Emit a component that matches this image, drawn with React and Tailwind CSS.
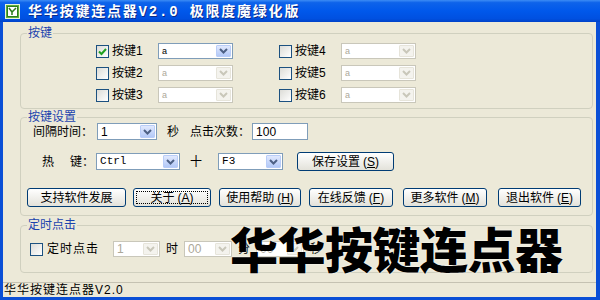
import React from "react";

const Chevron = ({ color }) => (
  <svg width="9" height="6" viewBox="0 0 9 6">
    <path d="M1 1 L4.5 4.5 L8 1" fill="none" stroke={color} strokeWidth="2" />
  </svg>
);

function Combo({ cls, text, disabled, textCls = "text-[10px]" }) {
  return (
    <div
      className={`${cls} flex border bg-white shrink-0 ${
        disabled ? "border-[#C9C7BA]" : "border-[#7F9DB9]"
      }`}
    >
      <div
        className={`flex-1 flex items-center pl-[3px] overflow-hidden whitespace-nowrap leading-none ${textCls} ${
          disabled ? "text-[#ACA899]" : "text-black"
        }`}
      >
        {text}
      </div>
      <div
        className={`w-[15px] m-[1px] flex items-center justify-center rounded-[1px] border ${
          disabled
            ? "border-[#E6E4DA] bg-[#F4F3EE]"
            : "border-[#B9CDF8] bg-gradient-to-b from-[#E1E9FE] to-[#B3C9F7]"
        }`}
      >
        <Chevron color={disabled ? "#C9C7BA" : "#4D6185"} />
      </div>
    </div>
  );
}

function Check({ checked }) {
  return (
    <div className="w-[13px] h-[13px] shrink-0 border border-[#1C5180] bg-gradient-to-br from-[#DCDCD7] to-white flex items-center justify-center">
      {checked && (
        <svg width="9" height="9" viewBox="0 0 9 9">
          <path d="M1 4.5 L3.5 7 L8 2" fill="none" stroke="#21A121" strokeWidth="2" />
        </svg>
      )}
    </div>
  );
}

function Btn({ cls, children, focused }) {
  return (
    <div
      className={`${cls} h-[19px] shrink-0 rounded-[3px] border border-[#003C74] bg-gradient-to-b from-white to-[#E3E2DA] flex items-center justify-center text-[12px] leading-none p-[2px]`}
    >
      {focused ? (
        <div className="w-full h-full border border-dotted border-black flex items-center justify-center">
          {children}
        </div>
      ) : (
        children
      )}
    </div>
  );
}

function KeyItem({ label, checked }) {
  return (
    <div className="flex items-center h-[16px]">
      <Check checked={checked} />
      <span className="ml-[3px] w-[46px] leading-none">{label}</span>
      <Combo cls="w-[75px] h-[16px]" text="a" disabled={!checked} textCls="text-[9px]" />
    </div>
  );
}

function Legend({ children }) {
  return (
    <legend className="ml-[6px] px-[1px] h-[12px] leading-[12px] text-[12px] text-[#1B43AE]">
      {children}
    </legend>
  );
}

const Mn = ({ c }) => (
  <span className="ml-[3px]">
    (<span className="underline">{c}</span>)
  </span>
);

export default function App() {
  return (
    <div className="w-[600px] h-[300px] relative overflow-hidden flex flex-col bg-[#0A4FD6] font-['Liberation_Sans','Noto_Sans_CJK_SC',sans-serif] text-[12px] text-black">
      {/* title bar */}
      <div className="h-[22px] shrink-0 flex items-center pl-[5px] bg-[linear-gradient(to_bottom,#3C8CF5_0%,#0E63EA_12%,#0058EB_50%,#0050E0_85%,#0042C8_100%)]">
        <svg width="15" height="15" viewBox="0 0 15 15" className="shrink-0">
          <rect x="0.5" y="0.5" width="14" height="14" fill="#5FAE3A" stroke="#E8F5D8" />
          <rect x="2.5" y="2.5" width="10" height="10" fill="#FFFFFF" stroke="#2E7D1E" />
          <path d="M4 4 L7 8 L11 4 M7 8 L7 11" fill="none" stroke="#2E7D1E" strokeWidth="1.5" />
        </svg>
        <div className="ml-[8px] text-white font-bold text-[14px] leading-none tracking-[1.8px] [text-shadow:1px_1px_0_#0B2C8A] whitespace-nowrap font-['Noto_Sans_CJK_SC',sans-serif]">
          华华按键连点器<span className="font-['Liberation_Mono',monospace]">V2.0 </span>极限度魔绿化版
        </div>
      </div>

      {/* client area */}
      <div className="flex-1 ml-[3px] mr-[4px] mb-[3px] bg-[#ECE9D8] flex flex-col">
        {/* group 1 */}
        <fieldset className="mt-[5px] ml-[17px] mr-[3px] border border-[#D0D0BF] rounded-[4px]">
          <Legend>按键</Legend>
          <div className="pl-[75px] pt-[4px] pb-[5px] flex flex-col gap-[6px]">
            <div className="flex">
              <KeyItem label="按键1" checked />
              <div className="ml-[46px]">
                <KeyItem label="按键4" />
              </div>
            </div>
            <div className="flex">
              <KeyItem label="按键2" />
              <div className="ml-[46px]">
                <KeyItem label="按键5" />
              </div>
            </div>
            <div className="flex">
              <KeyItem label="按键3" />
              <div className="ml-[46px]">
                <KeyItem label="按键6" />
              </div>
            </div>
          </div>
        </fieldset>

        {/* group 2 */}
        <fieldset className="mt-[2px] ml-[17px] mr-[3px] border border-[#D0D0BF] rounded-[4px]">
          <Legend>按键设置</Legend>
          <div className="pb-[8px] flex flex-col">
            <div className="pl-[12px] h-[17px] flex items-center">
              <span className="leading-none">间隔时间：</span>
              <Combo cls="ml-[4px] w-[60px] h-[17px]" text="1" textCls="text-[12px]" />
              <span className="ml-[10px] leading-none">秒</span>
              <span className="ml-[11px] leading-none">点击次数：</span>
              <div className="ml-[2px] w-[56px] h-[17px] border border-[#7F9DB9] bg-white flex items-center pl-[3px] leading-none">
                100
              </div>
            </div>
            <div className="pl-[12px] mt-[12px] h-[19px] flex items-center">
              <span className="ml-[9px] leading-none">热</span>
              <span className="ml-[16px] leading-none">键：</span>
              <Combo
                cls="ml-[2px] w-[84px] h-[17px]"
                text="Ctrl"
                textCls="text-[11px] font-['Liberation_Mono',monospace]"
              />
              <span className="ml-[10px] leading-none">十</span>
              <Combo
                cls="ml-[16px] w-[65px] h-[17px]"
                text="F3"
                textCls="text-[11px] font-['Liberation_Mono',monospace]"
              />
              <Btn cls="ml-[14px] w-[97px]">
                保存设置<Mn c="S" />
              </Btn>
            </div>
            <div className="pl-[6px] mt-[17px] flex items-center">
              <Btn cls="w-[99px]">支持软件发展</Btn>
              <Btn cls="ml-[7px] w-[78px]" focused>
                关于<Mn c="A" />
              </Btn>
              <Btn cls="ml-[8px] w-[82px]">
                使用帮助<Mn c="H" />
              </Btn>
              <Btn cls="ml-[8px] w-[84px]">
                在线反馈<Mn c="F" />
              </Btn>
              <Btn cls="ml-[10px] w-[84px]">
                更多软件<Mn c="M" />
              </Btn>
              <Btn cls="ml-[11px] w-[83px]">
                退出软件<Mn c="E" />
              </Btn>
            </div>
          </div>
        </fieldset>

        {/* group 3 */}
        <fieldset className="mt-[3px] ml-[17px] mr-[3px] border border-[#D0D0BF] rounded-[4px]">
          <Legend>定时点击</Legend>
          <div className="pl-[9px] pt-[10px] pb-[15px] h-[41px] flex items-center">
            <Check />
            <span className="ml-[4px] leading-none tracking-[1px]">定时点击</span>
            <Combo cls="ml-[14px] w-[47px] h-[16px]" text="1" disabled textCls="text-[12px]" />
            <span className="ml-[6px] leading-none">时</span>
            <Combo cls="ml-[6px] w-[48px] h-[16px]" text="00" disabled textCls="text-[12px]" />
            <span className="ml-[6px] leading-none">分</span>
            <Combo cls="ml-[6px] w-[48px] h-[16px]" text="00" disabled textCls="text-[12px]" />
            <span className="ml-[6px] leading-none">秒</span>
          </div>
        </fieldset>

        <div className="flex-1" />

        {/* status bar */}
        <div className="h-[15px] border-t border-[#C5C2B2] flex items-center pl-[1px] leading-none tracking-[1px] whitespace-nowrap">
          华华按键连点器V2.0
        </div>
      </div>

      {/* watermark overlay */}
      <div className="absolute left-[230px] top-[223px] text-[48px] leading-[48px] font-black tracking-[-0.5px] text-black whitespace-nowrap font-['Noto_Sans_CJK_SC',sans-serif] [text-shadow:0_0_2px_#ffffff]">
        华华按键连点器
      </div>
    </div>
  );
}
